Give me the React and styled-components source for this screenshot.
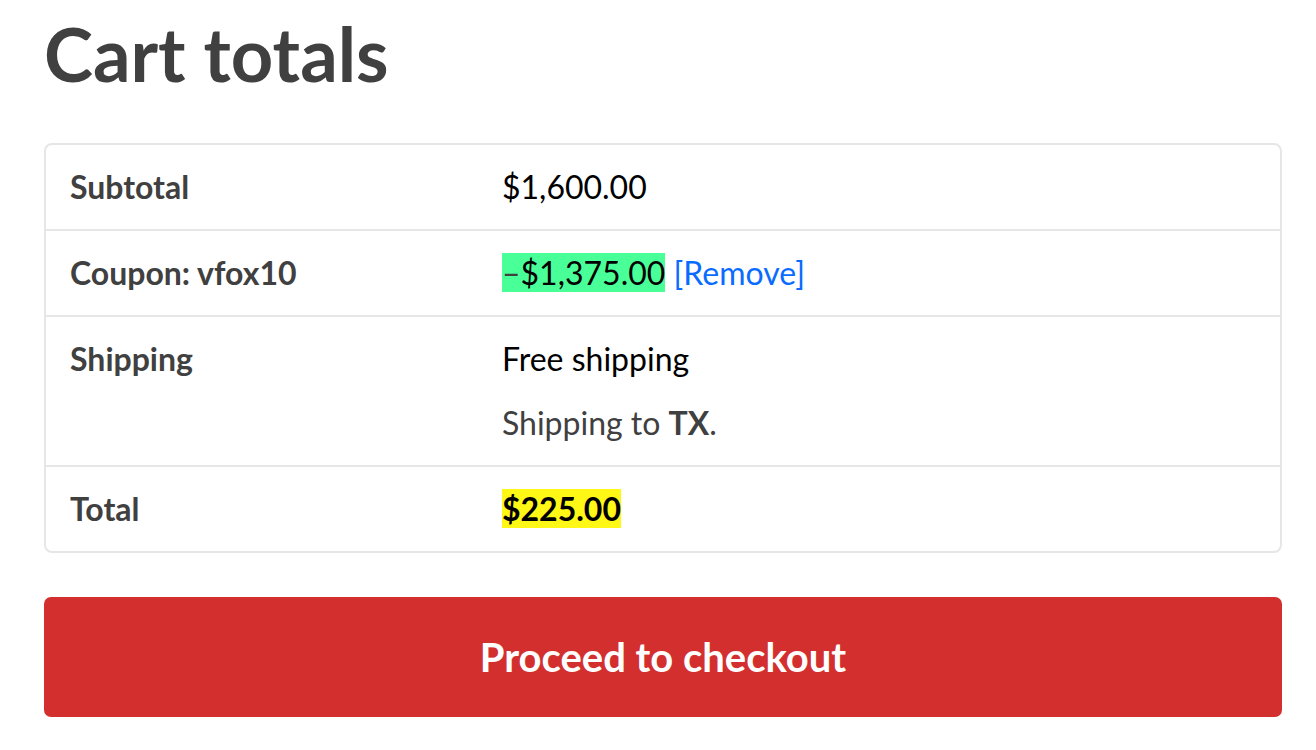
import React from "react";
import styled, { createGlobalStyle } from "styled-components";

const Global = createGlobalStyle`
  html, body { margin: 0; padding: 0; background: #fff; }
  body { font-family: Lato, "Open Sans", "Liberation Sans", sans-serif; color: #404040; }
  * { box-sizing: border-box; }
`;

const Page = styled.div`
  padding: 0 34px 0 44px;
`;

const Title = styled.h2`
  margin: 8px 0 0;
  font-size: 74px;
  line-height: 92px;
  font-weight: 700;
  color: #404040;
`;

const Table = styled.div`
  margin-top: 43px;
  border: 2px solid #e6e6e8;
  border-radius: 8px;
`;

const Row = styled.div`
  display: grid;
  grid-template-columns: 432px 1fr;
  border-top: ${(p) => (p.$first ? "none" : "2px solid #e6e6e8")};
`;

const Label = styled.div`
  padding: 18px 24px;
  font-size: 32px;
  line-height: 48px;
  font-weight: 700;
  color: #404040;
`;

const Value = styled.div`
  padding: 18px 24px;
  font-size: 32px;
  line-height: 48px;
  color: #000;
`;

const Mark = styled.span`
  background: ${(p) => p.$bg};
  font-weight: ${(p) => (p.$bold ? 700 : 400)};
  color: #000;
`;

const Minus = styled.span`
  color: #404040;
`;

const Link = styled.a`
  color: #0a6cff;
  text-decoration: none;
`;

const Para = styled.p`
  margin: 0;
  & + & { margin-top: 16px; }
  color: ${(p) => p.$color || "#000"};
`;

const Strong = styled.strong`
  font-weight: 700;
`;

const Button = styled.button`
  display: flex;
  align-items: center;
  justify-content: center;
  width: 100%;
  height: 120px;
  margin-top: 44px;
  border: none;
  border-radius: 7px;
  background: #d32f2f;
  color: #fff;
  font-family: Lato, "Open Sans", "Liberation Sans", sans-serif;
  font-size: 40px;
  font-weight: 700;
  cursor: pointer;
`;

export default function App() {
  return (
    <Page>
      <Global />
      <Title>Cart totals</Title>
      <Table>
        <Row $first>
          <Label>Subtotal</Label>
          <Value>$1,600.00</Value>
        </Row>
        <Row>
          <Label>Coupon: vfox10</Label>
          <Value>
            <Mark $bg="#48ff98"><Minus>–</Minus>$1,375.00</Mark>{" "}
            <Link href="#">[Remove]</Link>
          </Value>
        </Row>
        <Row>
          <Label>Shipping</Label>
          <Value>
            <Para>Free shipping</Para>
            <Para $color="#404040">
              Shipping to <Strong>TX</Strong>.
            </Para>
          </Value>
        </Row>
        <Row>
          <Label>Total</Label>
          <Value>
            <Mark $bg="#fff715" $bold>$225.00</Mark>
          </Value>
        </Row>
      </Table>
      <Button>Proceed to checkout</Button>
    </Page>
  );
}
